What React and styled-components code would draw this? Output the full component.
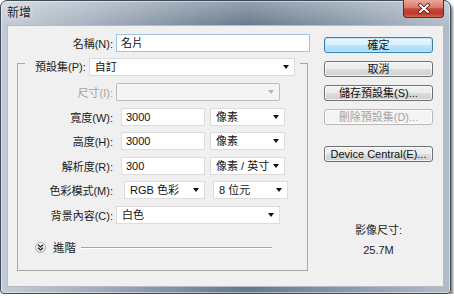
import React from 'react';
import styled, { createGlobalStyle } from 'styled-components';

const GlobalStyle = createGlobalStyle`
  html, body { margin: 0; padding: 0; background: #fff; }
  body {
    font-family: "Liberation Sans", "Noto Sans CJK TC", sans-serif;
    font-size: 11px;
    color: #1b1b1b;
  }
`;

const Window = styled.div`
  width: 451px;
  height: 294px;
  box-sizing: border-box;
  display: flex;
  flex-direction: column;
  border: 1px solid #3e4b5b;
  border-radius: 7px 7px 4px 4px;
  background:
    linear-gradient(180deg, rgba(255, 255, 255, 0.3), rgba(255, 255, 255, 0) 26px),
    linear-gradient(90deg, #c3ccd6 0%, #a7b3c0 18%, #7b8b9d 42%, #68788b 55%, #8696a6 75%, #b2bdc9 100%);
  box-shadow: 2px 3px 3px rgba(0, 0, 0, 0.5), inset 0 0 0 1px rgba(255, 255, 255, 0.45);
`;

const TitleBar = styled.div`
  height: 24px;
  display: flex;
  align-items: flex-start;
  padding-left: 6px;
`;

const Title = styled.span`
  margin-top: 4px;
  font-size: 12px;
  line-height: 16px;
  color: #1a1a1a;
  text-shadow: 0 0 5px rgba(255, 255, 255, 0.9);
`;

const CloseButton = styled.div`
  margin-left: auto;
  margin-right: 6px;
  margin-top: -1px;
  width: 41px;
  height: 18px;
  box-sizing: border-box;
  border: 1px solid #5b2a24;
  border-top: none;
  border-radius: 0 0 4px 4px;
  background: linear-gradient(180deg, #eaa99b 0%, #d9786b 45%, #c6443a 52%, #c03a2d 80%, #d5654c 100%);
  display: flex;
  align-items: center;
  justify-content: center;
`;

const Frame = styled.div`
  flex: 1;
  display: flex;
  padding: 0 6px 6px;
`;

const Client = styled.div`
  flex: 1;
  display: flex;
  background: #f0f0f0;
  border: 1px solid #b3bdc8;
`;

const LeftColumn = styled.div`
  width: 302px;
  padding-top: 8px;
`;

const RightColumn = styled.div`
  width: 109px;
  margin-left: 14px;
  padding-top: 11px;
  display: flex;
  flex-direction: column;
`;

const Row = styled.div`
  display: flex;
  align-items: center;
  height: 18px;
  gap: ${(p) => p.$gap || 0}px;
`;

const Label = styled.span`
  width: ${(p) => p.$w}px;
  box-sizing: border-box;
  padding-right: 3px;
  text-align: right;
  white-space: nowrap;
  color: ${(p) => (p.$disabled ? '#a3a3a3' : '#1b1b1b')};
`;

const LegendLabel = styled.span`
  white-space: nowrap;
  line-height: 18px;
`;

const Field = styled.div`
  box-sizing: border-box;
  width: ${(p) => p.$w}px;
  flex: none;
  height: 18px;
  display: flex;
  align-items: center;
  padding: 0 4px 0 ${(p) => (p.$select ? 5 : 4)}px;
  background: ${(p) => (p.$disabled ? '#f4f4f4' : '#fff')};
  border: 1px solid ${(p) => (p.$focus ? '#9fc3e5' : p.$disabled ? '#bcbcbc' : '#dcdcdc')};
  border-radius: ${(p) => (p.$disabled ? 2 : 0)}px;
  color: #111;
  white-space: nowrap;
`;

const Value = styled.span`
  flex: 1;
  line-height: 16px;
`;

const Arrow = styled.span`
  width: 0;
  height: 0;
  border-left: 3.5px solid transparent;
  border-right: 3.5px solid transparent;
  border-top: 4px solid ${(p) => (p.$disabled ? '#b4b4b4' : '#111')};
  margin-right: 1px;
`;

const Group = styled.fieldset`
  margin: 6px 0 0 9px;
  padding: 0 0 16px 0;
  width: 291px;
  box-sizing: border-box;
  border: 1px solid #a8a8a8;
  min-width: 0;
`;

const Legend = styled.legend`
  margin-left: 7px;
  padding: 0 5px 0 10px;
  display: flex;
  align-items: flex-start;
  gap: 3px;
  height: 10px;
`;

const Rows = styled.div`
  display: flex;
  flex-direction: column;
  gap: 6.6px;
  padding-top: 15px;
`;

const AdvancedRow = styled.div`
  display: flex;
  align-items: center;
  height: 12px;
  margin-top: 18px;
  padding-left: 17px;
  margin-right: 35px;
`;

const RoundToggle = styled.div`
  width: 11px;
  height: 11px;
  box-sizing: border-box;
  border-radius: 50%;
  border: 1px solid #a9a9a9;
  background: linear-gradient(180deg, #fdfdfd, #dedede);
  display: flex;
  align-items: center;
  justify-content: center;
`;

const AdvancedText = styled.span`
  margin-left: 7px;
  line-height: 12px;
  font-size: 11.5px;
`;

const Rule = styled.div`
  flex: 1;
  margin-left: 5px;
  height: 1px;
  background: #a6a6a6;
  border-bottom: 1px solid #fff;
`;

const Button = styled.div`
  height: 16px;
  box-sizing: border-box;
  margin-top: ${(p) => p.$mt || 0}px;
  border: 1px solid ${(p) => (p.$primary ? '#3c7fb1' : p.$disabled ? '#b7b7b7' : '#707070')};
  border-radius: 3px;
  background: ${(p) =>
    p.$primary
      ? 'linear-gradient(180deg, #eaf6fd 0%, #d9f0fc 50%, #bee6fd 51%, #a7d9f5 100%)'
      : p.$disabled
      ? '#f4f4f4'
      : 'linear-gradient(180deg, #f2f2f2 0%, #ebebeb 50%, #dddddd 51%, #cfcfcf 100%)'};
  box-shadow: ${(p) => (p.$primary ? 'inset 0 0 0 1px #bfe3f7' : 'inset 0 0 0 1px rgba(255,255,255,0.7)')};
  color: ${(p) => (p.$disabled ? '#a4a4a4' : '#111')};
  line-height: 14px;
  text-align: center;
  white-space: nowrap;
`;

const Info = styled.div`
  margin-top: ${(p) => p.$mt}px;
  text-align: center;
  line-height: 14px;
  color: #222;
`;

const Select = ({ w, value, disabled }) => (
  <Field $w={w} $select $disabled={disabled}>
    <Value>{value}</Value>
    <Arrow $disabled={disabled} />
  </Field>
);

const Input = ({ w, value, focus }) => (
  <Field $w={w} $focus={focus}>
    <Value>{value}</Value>
  </Field>
);

const CloseGlyph = () => (
  <svg width="14" height="11" viewBox="0 0 14 11">
    <path d="M3 2 L11 9 M11 2 L3 9" stroke="#4a1a14" strokeWidth="3.6" strokeLinecap="round" />
    <path d="M3 2 L11 9 M11 2 L3 9" stroke="#fff" strokeWidth="2" strokeLinecap="round" />
  </svg>
);

const ChevronsDown = () => (
  <svg width="7" height="7" viewBox="0 0 7 7">
    <path d="M1 0.8 L3.5 3 L6 0.8 M1 3.8 L3.5 6 L6 3.8" stroke="#222" strokeWidth="1.3" fill="none" />
  </svg>
);

export default function App() {
  return (
    <>
      <GlobalStyle />
      <Window>
        <TitleBar>
          <Title>新增</Title>
          <CloseButton>
            <CloseGlyph />
          </CloseButton>
        </TitleBar>
        <Frame>
          <Client>
            <LeftColumn>
              <Row>
                <Label $w={108}>名稱(N):</Label>
                <Input w={194} value="名片" focus />
              </Row>
              <Group>
                <Legend>
                  <LegendLabel>預設集(P):</LegendLabel>
                  <Select w={206} value="自訂" />
                </Legend>
                <Rows>
                  <Row>
                    <Label $w={98} $disabled>尺寸(I):</Label>
                    <Select w={164} value="" disabled />
                  </Row>
                  <Row $gap={5}>
                    <Label $w={98}>寬度(W):</Label>
                    <Input w={84} value="3000" />
                    <Select w={75} value="像素" />
                  </Row>
                  <Row $gap={5}>
                    <Label $w={98}>高度(H):</Label>
                    <Input w={84} value="3000" />
                    <Select w={75} value="像素" />
                  </Row>
                  <Row $gap={5}>
                    <Label $w={98}>解析度(R):</Label>
                    <Input w={84} value="300" />
                    <Select w={75} value="像素 / 英寸" />
                  </Row>
                  <Row $gap={8}>
                    <Label $w={98}>色彩模式(M):</Label>
                    <Select w={81} value="RGB 色彩" />
                    <Select w={75} value="8 位元" />
                  </Row>
                  <Row>
                    <Label $w={98}>背景內容(C):</Label>
                    <Select w={164} value="白色" />
                  </Row>
                </Rows>
                <AdvancedRow>
                  <RoundToggle>
                    <ChevronsDown />
                  </RoundToggle>
                  <AdvancedText>進階</AdvancedText>
                  <Rule />
                </AdvancedRow>
              </Group>
            </LeftColumn>
            <RightColumn>
              <Button $primary>確定</Button>
              <Button $mt={8}>取消</Button>
              <Button $mt={8}>儲存預設集(S)...</Button>
              <Button $mt={8} $disabled>刪除預設集(D)...</Button>
              <Button $mt={21}>Device Central(E)...</Button>
              <Info $mt={61}>影像尺寸:</Info>
              <Info $mt={6}>25.7M</Info>
            </RightColumn>
          </Client>
        </Frame>
      </Window>
    </>
  );
}
